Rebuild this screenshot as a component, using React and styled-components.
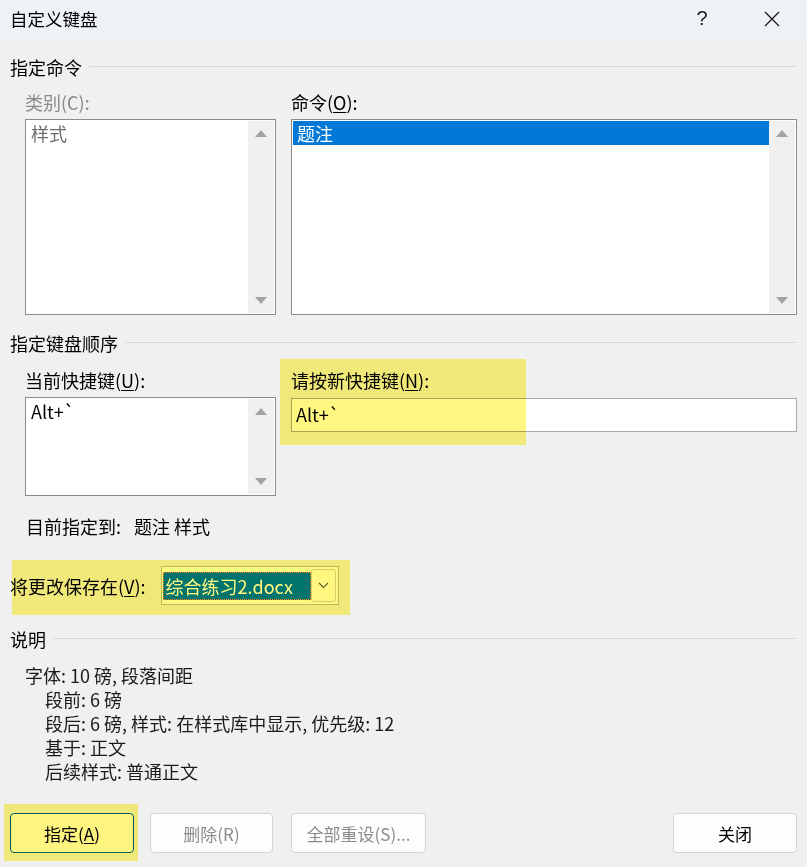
import React from 'react';
import styled, { createGlobalStyle } from 'styled-components';

const GlobalStyle = createGlobalStyle`
  html, body {
    margin: 0;
    padding: 0;
    background: #f0f0f0;
  }
  body {
    font-family: "Noto Sans CJK SC", "Noto Sans", sans-serif;
  }
  * {
    box-sizing: border-box;
  }
`;

const Window = styled.div`
  position: relative;
  width: 807px;
  height: 867px;
  display: flex;
  flex-direction: column;
  background: #f0f0f0;
  color: #000;
  font-size: 18px;
  overflow: hidden;
`;

const TitleBar = styled.div`
  height: 40px;
  flex: none;
  display: flex;
  align-items: center;
  padding-left: 10px;
  background: #eef2f7;
`;

const Title = styled.div`
  flex: 1;
  font-size: 17.5px;
  line-height: 24px;
  margin-top: -3px;
`;

const TitleButton = styled.div`
  width: 46px;
  height: 40px;
  display: flex;
  align-items: center;
  justify-content: center;
  margin-right: ${({ $gap }) => $gap}px;
  font-family: "Liberation Sans", sans-serif;
  font-size: 20px;
  font-weight: 300;
  color: #1a1a1a;
  margin-top: -3px;
`;

const Content = styled.div`
  padding: 0 10px;
`;

const SectionHeader = styled.div`
  display: flex;
  align-items: center;
  gap: 7px;
  line-height: 24px;
  margin-top: ${({ $top }) => $top}px;

  &::after {
    content: '';
    flex: 1;
    height: 1px;
    margin-top: -1px;
    background: #dadada;
  }
`;

const Columns = styled.div`
  display: grid;
  grid-template-columns: 251px 506px;
  column-gap: 15px;
  padding-left: 15px;
  margin-top: ${({ $top }) => $top}px;
`;

const Column = styled.div`
  display: flex;
  flex-direction: column;
`;

const Label = styled.div`
  line-height: 24px;
  margin-bottom: 5px;
  color: ${({ $disabled }) => ($disabled ? '#8a8a8a' : '#000')};
  white-space: nowrap;

  u {
    text-underline-offset: 2px;
  }
`;

const ListBox = styled.div`
  height: ${({ $height }) => $height}px;
  display: flex;
  padding: 1px;
  background: #fff;
  border: 1px solid #8b8b8b;
`;

const Items = styled.div`
  flex: 1;
`;

const Item = styled.div`
  height: 24px;
  line-height: 24px;
  padding-left: 4px;
  background: ${({ $selected }) => ($selected ? '#0078d7' : 'transparent')};
  color: ${({ $selected, $muted }) =>
    $selected ? '#fff' : $muted ? '#6d6d6d' : '#000'};
`;

const ScrollTrack = styled.div`
  width: 26px;
  display: flex;
  flex-direction: column;
  justify-content: space-between;
  align-items: center;
  padding: 8px 0;
  background: #f0f0f0;
`;

const KeyInput = styled.div`
  height: 34px;
  margin-top: 1px;
  padding-left: 4px;
  line-height: 30px;
  background: #fff;
  border: 1px solid #a9a9ae;
`;

const AssignedRow = styled.div`
  display: flex;
  gap: 13px;
  line-height: 24px;
  margin-top: 18px;
  padding-left: 16px;
`;

const SaveRow = styled.div`
  display: flex;
  align-items: center;
  gap: 15px;
  margin-top: 28px;

  u {
    text-underline-offset: 2px;
  }
`;

const Combo = styled.div`
  width: 178px;
  height: 39px;
  display: flex;
  align-items: center;
  padding: 0 2px 0 1px;
  background: #fff;
  border: 1px solid #bdbdbd;
`;

const ComboValue = styled.div`
  flex: 1;
  height: 28px;
  line-height: 26px;
  padding-left: 2px;
  color: #fff;
  background: #0078d7;
  border: 1px dotted #ff8728;
  white-space: nowrap;
  overflow: hidden;
`;

const ComboButton = styled.div`
  width: 25px;
  height: 33px;
  display: flex;
  align-items: center;
  justify-content: center;
  background: #fff;
  border: 1px solid #d4d4d4;
  border-radius: 3px;
`;

const Description = styled.div`
  margin-top: 12px;
  padding-left: 15px;
  color: #1a1a1a;
`;

const DescLine = styled.div`
  line-height: 24px;
  padding-left: ${({ $indent }) => ($indent ? 20 : 0)}px;
  white-space: nowrap;
`;

const Footer = styled.div`
  margin-top: auto;
  display: flex;
  align-items: center;
  padding: 0 10px 14px;
`;

const Button = styled.div`
  width: ${({ $width }) => $width}px;
  height: 40px;
  display: flex;
  align-items: center;
  justify-content: center;
  margin-left: ${({ $gap }) => $gap}px;
  font-size: 17px;
  color: ${({ $disabled }) => ($disabled ? '#8c8c8c' : '#000')};
  background: #fdfdfd;
  border: 1px solid ${({ $primary }) => ($primary ? '#005fb8' : '#d3d3d3')};
  border-radius: 4px;

  &:last-child {
    margin-left: auto;
  }

  u {
    text-underline-offset: 2px;
  }
`;

const Highlight = styled.div`
  position: absolute;
  left: ${({ $left }) => $left}px;
  top: ${({ $top }) => $top}px;
  width: ${({ $width }) => $width}px;
  height: ${({ $height }) => $height}px;
  background: #fff780;
  mix-blend-mode: multiply;
  pointer-events: none;
  z-index: 2;
`;

const ArrowUp = () => (
  <svg width="14" height="8" viewBox="0 0 14 8">
    <path d="M1 8 L7 1 L13 8 Z" fill="#a3a3a3" />
  </svg>
);

const ArrowDown = () => (
  <svg width="14" height="8" viewBox="0 0 14 8">
    <path d="M1 0 L7 7 L13 0 Z" fill="#a3a3a3" />
  </svg>
);

const Scrollbar = () => (
  <ScrollTrack>
    <ArrowUp />
    <ArrowDown />
  </ScrollTrack>
);

const CloseIcon = () => (
  <svg width="16" height="16" viewBox="0 0 16 16">
    <path d="M1 1 L15 15 M15 1 L1 15" stroke="#1a1a1a" strokeWidth="1.3" />
  </svg>
);

const Chevron = () => (
  <svg width="11" height="7" viewBox="0 0 11 7">
    <path d="M1 1 L5.5 5.5 L10 1" fill="none" stroke="#606060" strokeWidth="1.1" />
  </svg>
);

const App = () => (
  <>
    <GlobalStyle />
    <Window>
      <TitleBar>
        <Title>自定义键盘</Title>
        <TitleButton $gap={24}>?</TitleButton>
        <TitleButton $gap={12}>
          <CloseIcon />
        </TitleButton>
      </TitleBar>

      <Content>
        <SectionHeader $top={15}>指定命令</SectionHeader>
        <Columns $top={11}>
          <Column>
            <Label $disabled>类别(C):</Label>
            <ListBox $height={196}>
              <Items>
                <Item $muted>样式</Item>
              </Items>
              <Scrollbar />
            </ListBox>
          </Column>
          <Column>
            <Label>
              命令(<u>O</u>):
            </Label>
            <ListBox $height={196}>
              <Items>
                <Item $selected>题注</Item>
              </Items>
              <Scrollbar />
            </ListBox>
          </Column>
        </Columns>

        <SectionHeader $top={16}>指定键盘顺序</SectionHeader>
        <Columns $top={13}>
          <Column>
            <Label>
              当前快捷键(<u>U</u>):
            </Label>
            <ListBox $height={99}>
              <Items>
                <Item>Alt+`</Item>
              </Items>
              <Scrollbar />
            </ListBox>
          </Column>
          <Column>
            <Label>
              请按新快捷键(<u>N</u>):
            </Label>
            <KeyInput>Alt+`</KeyInput>
          </Column>
        </Columns>

        <AssignedRow>
          <span>目前指定到:</span>
          <span>题注 样式</span>
        </AssignedRow>

        <SaveRow>
          <span>
            将更改保存在(<u>V</u>):
          </span>
          <Combo>
            <ComboValue>综合练习2.docx</ComboValue>
            <ComboButton>
              <Chevron />
            </ComboButton>
          </Combo>
        </SaveRow>

        <SectionHeader $top={22}>说明</SectionHeader>
        <Description>
          <DescLine>字体: 10 磅, 段落间距</DescLine>
          <DescLine $indent>段前: 6 磅</DescLine>
          <DescLine $indent>段后: 6 磅, 样式: 在样式库中显示, 优先级: 12</DescLine>
          <DescLine $indent>基于: 正文</DescLine>
          <DescLine $indent>后续样式: 普通正文</DescLine>
        </Description>
      </Content>

      <Footer>
        <Button $width={124} $gap={0} $primary>
          指定(<u>A</u>)
        </Button>
        <Button $width={123} $gap={16} $disabled>
          删除(R)
        </Button>
        <Button $width={135} $gap={18} $disabled>
          全部重设(S)...
        </Button>
        <Button $width={124}>关闭</Button>
      </Footer>

      <Highlight $left={280} $top={359} $width={246} $height={86} />
      <Highlight $left={12} $top={560} $width={338} $height={55} />
      <Highlight $left={4} $top={804} $width={134} $height={57} />
    </Window>
  </>
);

export default App;
